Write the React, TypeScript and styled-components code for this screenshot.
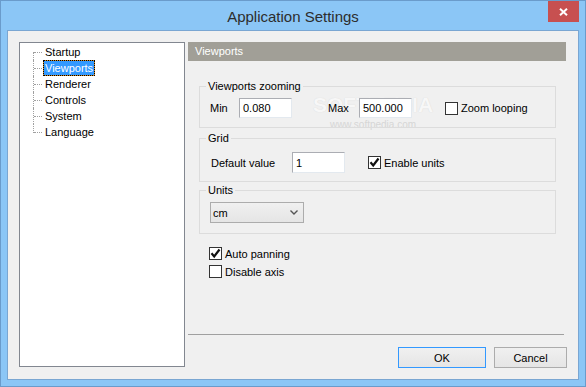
import React from "react";
import styled, { createGlobalStyle } from "styled-components";

const GlobalStyle = createGlobalStyle`
  html, body { margin: 0; padding: 0; background: #ffffff; }
  body { font-family: "Liberation Sans", Arial, sans-serif; font-size: 11px; color: #000; }
  * { box-sizing: border-box; }
`;

const Window = styled.div`
  position: relative;
  width: 586px;
  height: 387px;
  border: 1px solid #6a9bcb;
  background: #8bc6f6;
  display: flex;
  flex-direction: column;
  padding: 0 6px 6px 6px;
  overflow: hidden;
`;

const TitleBar = styled.div`
  height: 29px;
  display: flex;
  align-items: flex-start;
`;

const Title = styled.div`
  flex: 1;
  margin-left: 31px;
  height: 29px;
  line-height: 32px;
  text-align: center;
  font-size: 15px;
  color: #2d2d2d;
`;

const CloseButton = styled.div`
  width: 31px;
  height: 21px;
  background: #c75050;
  display: flex;
  align-items: center;
  justify-content: center;
`;

const Client = styled.div`
  position: relative;
  flex: 1;
  background: #f0f0f0;
  border: 1px solid #7aa6d2;
  display: flex;
  padding: 11px;
  gap: 3px;
`;

const Tree = styled.div`
  width: 166px;
  height: 325px;
  background: #ffffff;
  border: 1px solid #828790;
  padding-top: 1px;
`;

const TreeItem = styled.div<{ $pos: "first" | "mid" | "last" }>`
  position: relative;
  height: 16px;
  padding-left: 23px;
  display: flex;
  align-items: center;
  &::before {
    content: "";
    position: absolute;
    left: 14px;
    top: 8px;
    width: 8px;
    border-top: 1px dotted #a0a0a0;
  }
  &::after {
    content: "";
    position: absolute;
    left: 13px;
    top: ${(p) => (p.$pos === "first" ? "8px" : "0")};
    height: ${(p) => (p.$pos === "last" ? "9px" : p.$pos === "first" ? "8px" : "16px")};
    border-left: 1px dotted #a0a0a0;
  }
`;

const TreeLabel = styled.span<{ $selected?: boolean }>`
  height: 16px;
  line-height: 14px;
  padding: 0 1px;
  border: 1px solid ${(p) => (p.$selected ? "#d68a22" : "transparent")};
  outline: ${(p) => (p.$selected ? "1px dotted #000" : "none")};
  outline-offset: -1px;
  background: ${(p) => (p.$selected ? "#3399ff" : "transparent")};
  color: ${(p) => (p.$selected ? "#ffffff" : "#000")};
`;

const Panel = styled.div`
  position: relative;
  z-index: 1;
  width: 379px;
  display: flex;
  flex-direction: column;
`;

const PanelHeader = styled.div`
  width: 378px;
  height: 19px;
  line-height: 19px;
  background: #a19f97;
  color: #ffffff;
  padding-left: 7px;
`;

const Groups = styled.div`
  margin-left: 11px;
  width: 357px;
  display: flex;
  flex-direction: column;
`;

const Group = styled.div<{ $top: number; $height: number; $padTop: number }>`
  position: relative;
  margin-top: ${(p) => p.$top}px;
  height: ${(p) => p.$height}px;
  border: 1px solid #dcdcdc;
  padding: ${(p) => p.$padTop}px 0 0 10px;
`;

const Legend = styled.span`
  position: absolute;
  left: 6px;
  top: -8px;
  padding: 0 2px;
  background: #f0f0f0;
  line-height: 14px;
`;

const Row = styled.div`
  display: flex;
  align-items: center;
`;

const Label = styled.span<{ $width: number; $ml?: number }>`
  width: ${(p) => p.$width}px;
  margin-left: ${(p) => p.$ml ?? 0}px;
  flex-shrink: 0;
`;

const Input = styled.div<{ $width: number; $height?: number }>`
  width: ${(p) => p.$width}px;
  height: ${(p) => p.$height ?? 20}px;
  background: #ffffff;
  border: 1px solid;
  border-color: #abadb3 #e3e9ef #e3e9ef #abadb3;
  padding-left: 3px;
  display: flex;
  align-items: center;
  flex-shrink: 0;
`;

const CheckWrap = styled.div<{ $ml?: number }>`
  display: flex;
  align-items: center;
  margin-left: ${(p) => p.$ml ?? 0}px;
`;

const Box = styled.span`
  width: 13px;
  height: 13px;
  border: 1px solid #333333;
  background: #ffffff;
  display: flex;
  align-items: center;
  justify-content: center;
  flex-shrink: 0;
`;

const CheckText = styled.span`
  margin-left: 3px;
`;

const Select = styled.div`
  width: 94px;
  height: 21px;
  border: 1px solid #acacac;
  background: linear-gradient(#f0f0f0, #e5e5e5);
  display: flex;
  align-items: center;
  justify-content: space-between;
  padding: 0 5px 0 2px;
`;

const Options = styled.div`
  margin-top: 13px;
  margin-left: 10px;
  display: flex;
  flex-direction: column;
  gap: 5px;
`;

const Spacer = styled.div`
  flex: 1;
`;

const Separator = styled.div`
  width: 376px;
  border-top: 1px solid #a0a0a0;
  margin-bottom: 12px;
`;

const Buttons = styled.div`
  display: flex;
  justify-content: flex-end;
  gap: 8px;
`;

const Button = styled.div<{ $width: number; $default?: boolean }>`
  width: ${(p) => p.$width}px;
  height: 21px;
  border: 1px solid ${(p) => (p.$default ? "#3399ff" : "#acacac")};
  background: linear-gradient(#f0f0f0, #e5e5e5);
  display: flex;
  align-items: center;
  justify-content: center;
`;

const Watermark = styled.div`
  position: absolute;
  left: 303px;
  top: 63px;
  width: 124px;
  z-index: 0;
  pointer-events: none;
  display: flex;
  flex-direction: column;
  align-items: center;
`;

const WatermarkBig = styled.span`
  font-size: 21px;
  font-weight: bold;
  line-height: 22px;
  color: #f7f7f7;
  text-shadow: 0 0 1px #d4d4d4;
`;

const WatermarkSmall = styled.span`
  margin-top: 3px;
  font-size: 10px;
  color: #d6d6d6;
`;

const Check = ({ checked }: { checked?: boolean }) => (
  <Box>
    {checked && (
      <svg width="11" height="11" viewBox="0 0 11 11">
        <path d="M1.5 5.3 L4.2 8.4 L9.5 1.5" fill="none" stroke="#111" strokeWidth="2.2" />
      </svg>
    )}
  </Box>
);

const treeItems = ["Startup", "Viewports", "Renderer", "Controls", "System", "Language"];

export default function App() {
  return (
    <>
      <GlobalStyle />
      <Window>
        <TitleBar>
          <Title>Application Settings</Title>
          <CloseButton>
            <svg width="9" height="8" viewBox="0 0 9 8">
              <path d="M1 0.8 L8 7.2 M8 0.8 L1 7.2" stroke="#fff" strokeWidth="2" />
            </svg>
          </CloseButton>
        </TitleBar>
        <Client>
          <Watermark>
            <WatermarkBig>SOFTPEDIA</WatermarkBig>
            <WatermarkSmall>www.softpedia.com</WatermarkSmall>
          </Watermark>
          <Tree>
            {treeItems.map((t, i) => (
              <TreeItem
                key={t}
                $pos={i === 0 ? "first" : i === treeItems.length - 1 ? "last" : "mid"}
              >
                <TreeLabel $selected={t === "Viewports"}>{t}</TreeLabel>
              </TreeItem>
            ))}
          </Tree>
          <Panel>
            <PanelHeader>Viewports</PanelHeader>
            <Groups>
              <Group $top={25} $height={42} $padTop={11}>
                <Legend>Viewports zooming</Legend>
                <Row>
                  <Label $width={29}>Min</Label>
                  <Input $width={53}>0.080</Input>
                  <Label $width={31} $ml={36}>Max</Label>
                  <Input $width={53}>500.000</Input>
                  <CheckWrap $ml={33}>
                    <Check />
                    <CheckText>Zoom looping</CheckText>
                  </CheckWrap>
                </Row>
              </Group>
              <Group $top={10} $height={44} $padTop={13}>
                <Legend>Grid</Legend>
                <Row>
                  <Label $width={81} $ml={1}>Default value</Label>
                  <Input $width={53} $height={21}>1</Input>
                  <CheckWrap $ml={23}>
                    <Check checked />
                    <CheckText>Enable units</CheckText>
                  </CheckWrap>
                </Row>
              </Group>
              <Group $top={8} $height={44} $padTop={11}>
                <Legend>Units</Legend>
                <Select>
                  <span>cm</span>
                  <svg width="8" height="5" viewBox="0 0 8 5">
                    <path d="M0.5 0.5 L4 4 L7.5 0.5" fill="none" stroke="#555" strokeWidth="1.4" />
                  </svg>
                </Select>
              </Group>
              <Options>
                <CheckWrap>
                  <Check checked />
                  <CheckText>Auto panning</CheckText>
                </CheckWrap>
                <CheckWrap>
                  <Check />
                  <CheckText>Disable axis</CheckText>
                </CheckWrap>
              </Options>
            </Groups>
            <Spacer />
            <Separator />
            <Buttons>
              <Button $width={88} $default>OK</Button>
              <Button $width={73}>Cancel</Button>
            </Buttons>
          </Panel>
        </Client>
      </Window>
    </>
  );
}
